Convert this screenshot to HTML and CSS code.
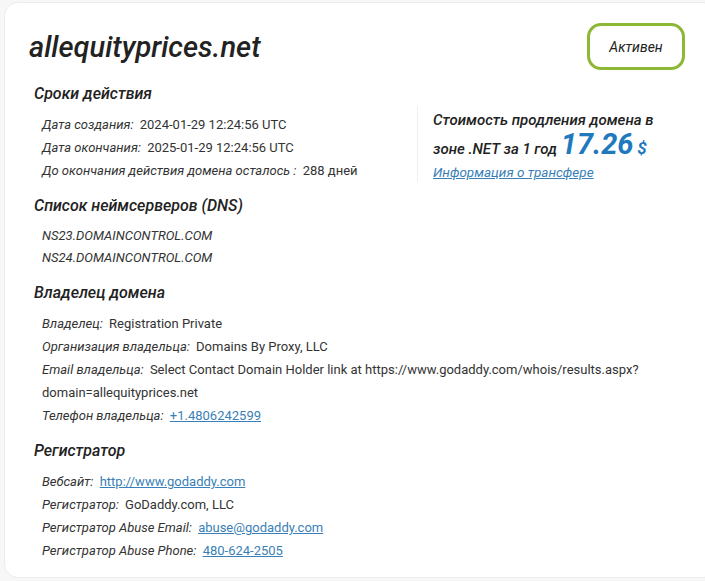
FILE: index.html
```html
<!DOCTYPE html>
<html lang="ru">
<head>
    <meta charset="UTF-8">
    <meta name="viewport" content="width=device-width, initial-scale=1.0">
    <title>allequityprices.net — Whois</title>
    <link rel="stylesheet" href="styles.css">
</head>
<body>
    <div class="whois-card">
        <div class="whois-head">
            <h1 class="domain-name">allequityprices.net</h1>
            <span class="status">Активен</span>
        </div>

        <div class="period">
            <div class="period-dates">
                <h2>Сроки действия</h2>
                <ul class="info-list">
                    <li><span class="label">Дата создания:</span> 2024-01-29 12:24:56 UTC</li>
                    <li><span class="label">Дата окончания:</span> 2025-01-29 12:24:56 UTC</li>
                    <li><span class="label">До окончания действия домена осталось :</span> 288 дней</li>
                </ul>
            </div>
            <div class="renew">
                <p class="renew-line">Стоимость продления домена в</p>
                <p class="renew-line">зоне .NET за 1 год <span class="renew-price">17.26</span> <span class="renew-cur">$</span></p>
                <a href="#" class="renew-link">Информация о трансфере</a>
            </div>
        </div>

        <h2>Список неймсерверов (DNS)</h2>
        <ul class="info-list ns-list">
            <li>NS23.DOMAINCONTROL.COM</li>
            <li>NS24.DOMAINCONTROL.COM</li>
        </ul>

        <h2>Владелец домена</h2>
        <ul class="info-list">
            <li><span class="label">Владелец:</span> Registration Private</li>
            <li><span class="label">Организация владельца:</span> Domains By Proxy, LLC</li>
            <li><span class="label">Email владельца:</span> Select Contact Domain Holder link at https://www.godaddy.com/whois/results.aspx?domain=allequityprices.net</li>
            <li><span class="label">Телефон владельца:</span> <a href="#">+1.4806242599</a></li>
        </ul>

        <h2>Регистратор</h2>
        <ul class="info-list">
            <li><span class="label">Вебсайт:</span> <a href="#">http://www.godaddy.com</a></li>
            <li><span class="label">Регистратор:</span> GoDaddy.com, LLC</li>
            <li><span class="label">Регистратор Abuse Email:</span> <a href="#">abuse@godaddy.com</a></li>
            <li><span class="label">Регистратор Abuse Phone:</span> <a href="#">480-624-2505</a></li>
        </ul>
    </div>
</body>
</html>
```

FILE: styles.css
```css
html {
    overflow: hidden;
}

body {
    margin: 0;
    padding: 2px 0 0 4px;
    background-color: #f7f7f7;
    font-family: Roboto, "Noto Sans", sans-serif;
    color: #2b2b2b;
}

.whois-card {
    box-sizing: border-box;
    height: 576px;
    margin-right: -12px;
    padding: 20px 31px 0 26px;
    background-color: #ffffff;
    border: 1px solid #ececec;
    border-radius: 14px;
}

.whois-head {
    display: flex;
    justify-content: space-between;
    align-items: center;
}

.domain-name {
    margin: 0 0 0 -2px;
    font-size: 29px;
    font-weight: 500;
    font-style: italic;
    color: #222222;
}

.status {
    display: flex;
    align-items: center;
    justify-content: center;
    box-sizing: border-box;
    width: 98px;
    height: 47px;
    border: 3px solid #8cb835;
    border-radius: 14px;
    font-size: 14px;
    font-style: italic;
    color: #222222;
}

h2 {
    margin: 13px 0 8px 3px;
    font-size: 16px;
    font-weight: 500;
    font-style: italic;
    line-height: 22px;
    color: #222222;
}

.info-list {
    margin: 0;
    padding: 0 0 0 11px;
    list-style: none;
    font-size: 13px;
    line-height: 23px;
    color: #333333;
}

.info-list .label {
    font-style: italic;
    margin-right: 3px;
}

.info-list a {
    color: #3a7fb7;
}

.ns-list {
    line-height: 22px;
    font-style: italic;
}

.period {
    display: flex;
}

.period-dates {
    flex: 0 0 386px;
}

/* renewal price box, split off by a thin rule */
.renew {
    align-self: flex-end;
    height: 76px;
    padding: 4px 0 0 15px;
    box-sizing: border-box;
    border-left: 1px solid #efefef;
    font-size: 15px;
    font-weight: 500;
    font-style: italic;
    color: #222222;
}

.renew-line {
    margin: 0;
    line-height: 20px;
}

.renew-line + .renew-line {
    line-height: 29px;
}

.renew-price {
    font-size: 29px;
    font-weight: 700;
    color: #2179bd;
}

.renew-cur {
    font-size: 17px;
    font-weight: 700;
    color: #2179bd;
}

.renew-link {
    display: block;
    line-height: 16px;
    font-size: 13.5px;
    font-weight: 400;
    color: #3a7fb7;
}
```
